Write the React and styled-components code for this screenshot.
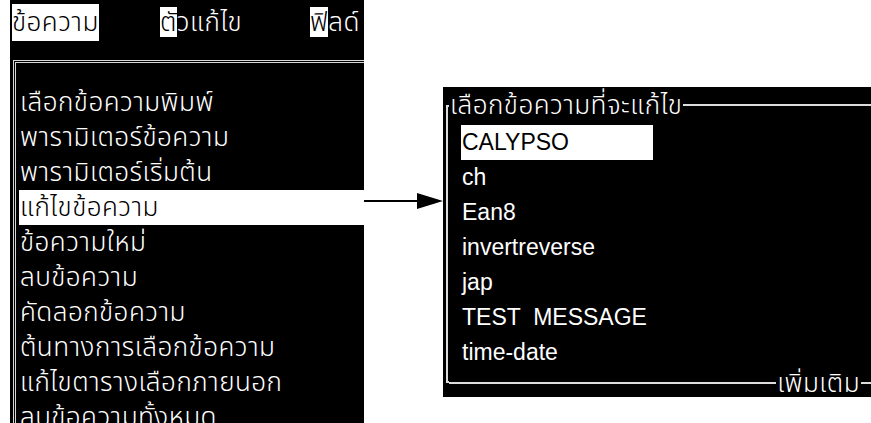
import React from "react";
import styled, { createGlobalStyle } from "styled-components";

const GlobalStyle = createGlobalStyle`
  html, body { margin: 0; padding: 0; background: #fff; }
  body { font-family: "Liberation Sans", "Noto Sans Thai", "Noto Sans", sans-serif; }
`;

const Page = styled.div`
  display: flex;
  align-items: flex-start;
  width: 871px;
  height: 423px;
  padding-left: 10px;
  box-sizing: border-box;
  overflow: hidden;
  background: #fff;
`;

const LeftPanel = styled.div`
  flex-shrink: 0;
  width: 354px;
  height: 423px;
  background: #000;
  color: #fff;
  overflow: hidden;
  display: flex;
  flex-direction: column;
  font-size: 26px;
  font-weight: 300;
  letter-spacing: 0.5px;
`;

const TabBar = styled.div`
  display: grid;
  grid-template-columns: 148px 150px auto;
  height: 37px;
  margin-top: 4px;
  padding-left: 2px;
  line-height: 37px;
  white-space: nowrap;
`;

const TabLabel = styled.span`
  display: inline-block;
  background: ${(p) => (p.$active ? "#fff" : "transparent")};
  color: ${(p) => (p.$active ? "#000" : "#fff")};
`;

const Hot = styled.span`
  background: #fff;
  color: #000;
`;

const MenuBox = styled.div`
  flex: 1;
  margin: 19px 0 0 3px;
  padding: 22px 0 0 3px;
  border-top: 3px double #d8d8d8;
  border-left: 3px double #d8d8d8;
`;

const MenuItem = styled.div`
  height: 35px;
  line-height: 35px;
  padding-left: 1px;
  white-space: nowrap;
  background: ${(p) => (p.$active ? "#fff" : "transparent")};
  color: ${(p) => (p.$active ? "#000" : "#fff")};
`;

const Connector = styled.svg`
  flex-shrink: 0;
  display: block;
  margin-top: 191px;
`;

const RightPanel = styled.div`
  flex-shrink: 0;
  width: 428px;
  height: 310px;
  margin-top: 87px;
  padding: 6px 0 0 3px;
  box-sizing: border-box;
  background: #000;
  color: #fff;
  overflow: hidden;
  display: flex;
  flex-direction: column;
`;

const EdgeRow = styled.div`
  display: flex;
  align-items: center;
  height: ${(p) => p.$h}px;
  white-space: nowrap;
  font-size: 26px;
  font-weight: 300;
  letter-spacing: 0.5px;
`;

const Corner = styled.span`
  flex-shrink: 0;
  align-self: ${(p) => (p.$bottom ? "flex-start" : "flex-end")};
  width: 3px;
  height: 50%;
  box-sizing: border-box;
  border-left: 2px solid #dcdcdc;
  ${(p) => (p.$bottom ? "border-bottom" : "border-top")}: 2px solid #dcdcdc;
  margin-${(p) => (p.$bottom ? "bottom" : "top")}: -1px;
`;

const Rule = styled.span`
  flex: ${(p) => (p.$w ? "0 0 " + p.$w + "px" : "1")};
  height: 2px;
  background: #dcdcdc;
`;

const EdgeText = styled.span`
  padding: 0 1px;
  line-height: 1;
`;

const ListBox = styled.div`
  border-left: 2px solid #dcdcdc;
  padding: 8px 0 0 13px;
  font-size: 23px;
`;

const ListItem = styled.div`
  width: 191px;
  height: 35px;
  line-height: 35px;
  padding-left: 1px;
  white-space: pre;
  background: ${(p) => (p.$active ? "#fff" : "transparent")};
  color: ${(p) => (p.$active ? "#000" : "#fff")};
`;

const menu = [
  "เลือกข้อความพิมพ์",
  "พารามิเตอร์ข้อความ",
  "พารามิเตอร์เริ่มต้น",
  "แก้ไขข้อความ",
  "ข้อความใหม่",
  "ลบข้อความ",
  "คัดลอกข้อความ",
  "ต้นทางการเลือกข้อความ",
  "แก้ไขตารางเลือกภายนอก",
  "ลบข้อความทั้งหมด",
];

const messages = [
  "CALYPSO",
  "ch",
  "Ean8",
  "invertreverse",
  "jap",
  "TEST  MESSAGE",
  "time-date",
];

export default function App() {
  return (
    <>
      <GlobalStyle />
      <Page>
        <LeftPanel>
          <TabBar>
            <span>
              <TabLabel $active>ข้อความ</TabLabel>
            </span>
            <span>
              <TabLabel>
                <Hot>ตั</Hot>วแก้ไข
              </TabLabel>
            </span>
            <span>
              <TabLabel>
                <Hot>ฟิ</Hot>ลด์
              </TabLabel>
            </span>
          </TabBar>
          <MenuBox>
            {menu.map((m, i) => (
              <MenuItem key={m} $active={i === 3}>
                {m}
              </MenuItem>
            ))}
          </MenuBox>
        </LeftPanel>

        <Connector width="79" height="20" viewBox="0 0 79 20">
          <line x1="0" y1="10" x2="56" y2="10" stroke="#000" strokeWidth="2" />
          <polygon points="53,2 79,10 53,18" fill="#000" />
        </Connector>

        <RightPanel>
          <EdgeRow $h={24}>
            <Corner />
            <EdgeText>เลือกข้อความที่จะแก้ไข</EdgeText>
            <Rule />
          </EdgeRow>
          <ListBox>
            {messages.map((m, i) => (
              <ListItem key={m} $active={i === 0}>
                {m}
              </ListItem>
            ))}
          </ListBox>
          <EdgeRow $h={26}>
            <Corner $bottom />
            <Rule />
            <EdgeText>เพิ่มเติม</EdgeText>
            <Rule $w={10} />
          </EdgeRow>
        </RightPanel>
      </Page>
    </>
  );
}
